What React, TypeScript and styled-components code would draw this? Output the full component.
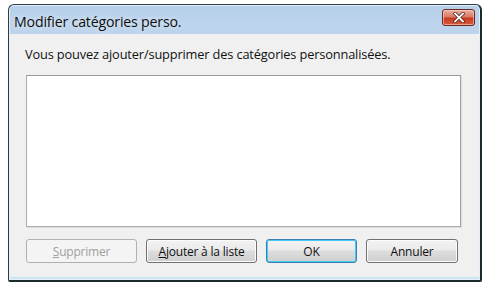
import React from "react";
import styled, { createGlobalStyle } from "styled-components";

const Global = createGlobalStyle`
  html, body { margin: 0; padding: 0; background: #ffffff; }
  body { font-family: "Open Sans", "Noto Sans", sans-serif; }
`;

const Page = styled.div`
  padding: 4px 0 0 8px;
`;

const Window = styled.div`
  width: 471px;
  border: 1px solid #2f3b44;
  border-right-width: 2px;
  border-bottom-width: 2px;
  border-right-color: #1c2a2e;
  border-bottom-color: #1c2a2e;
  border-radius: 6px 6px 2px 2px;
  background: linear-gradient(180deg, #b7d0ea 0%, #c8dcf0 30%, #d6e6f5 100%);
  display: flex;
  flex-direction: column;
  box-shadow: inset 0 0 0 1px #e3eef9;
  overflow: hidden;
`;

const TitleBar = styled.div`
  height: 29px;
  display: flex;
  align-items: flex-start;
  justify-content: space-between;
  padding: 0 5px 0 5px;
  flex: none;
`;

const Title = styled.span`
  margin-top: 8px;
  font-size: 14.2px;
  line-height: 18px;
  color: #0f0f0f;
  letter-spacing: -0.2px;
  text-shadow: 0 0 6px rgba(255, 255, 255, 0.9);
`;

const CloseBtn = styled.div`
  margin-top: 4px;
  width: 33px;
  height: 17px;
  box-sizing: border-box;
  border: 1px solid #6b2a20;
  border-radius: 3px;
  background: linear-gradient(180deg, #eab0a2 0%, #d97a66 45%, #c6391f 55%, #da5d3f 100%);
  display: flex;
  align-items: center;
  justify-content: center;
  box-shadow: inset 0 0 0 1px rgba(255, 220, 210, 0.55);
`;

const Content = styled.div`
  margin: 0 1px 2px 1px;
  background: #f0f0f0;
  border-bottom: 1px solid #bfe6ee;
  display: flex;
  flex-direction: column;
  padding: 12px 18px 14px 15px;
`;

const Label = styled.div`
  font-size: 12.8px;
  color: #111111;
  letter-spacing: -0.15px;
  height: 16px;
  line-height: 16px;
`;

const ListBox = styled.div`
  margin-top: 13px;
  margin-left: 1px;
  height: 150px;
  background: #ffffff;
  border: 1px solid #abadb3;
  border-top-color: #9a9a9a;
  border-right-color: #a0a0a0;
  box-shadow: 1px 1px 0 #dcdcdc;
`;

const ButtonRow = styled.div`
  margin-top: 12px;
  margin-left: 1px;
  display: flex;
  gap: 9px;
`;

const Button = styled.div<{ $w: number; $disabled?: boolean; $default?: boolean }>`
  width: ${(p) => p.$w}px;
  height: 24px;
  box-sizing: border-box;
  border: 1px solid ${(p) => (p.$disabled ? "#adb2b5" : p.$default ? "#3c7fb1" : "#707070")};
  border-radius: 3px;
  background: ${(p) =>
    p.$disabled
      ? "#f4f4f4"
      : "linear-gradient(180deg, #f2f2f2 0%, #ebebeb 45%, #dddddd 50%, #cfcfcf 100%)"};
  box-shadow: ${(p) =>
    p.$default ? "inset 0 0 0 1px #48c8f5" : p.$disabled ? "none" : "inset 0 0 0 1px #fcfcfc"};
  display: flex;
  align-items: center;
  justify-content: center;
  font-size: 12px;
  letter-spacing: -0.2px;
  color: ${(p) => (p.$disabled ? "#a0a0a0" : "#111111")};
`;

const U = styled.span`
  text-decoration: underline;
`;

export default function App() {
  return (
    <>
      <Global />
      <Page>
        <Window>
          <TitleBar>
            <Title>Modifier catégories perso.</Title>
            <CloseBtn>
              <svg width="12" height="11" viewBox="0 0 12 11">
                <path d="M2 1.5 L10 9.5 M10 1.5 L2 9.5" stroke="#4a1a12" strokeWidth="3.2" strokeLinecap="square" />
                <path d="M2 1.5 L10 9.5 M10 1.5 L2 9.5" stroke="#ffffff" strokeWidth="1.8" strokeLinecap="square" />
              </svg>
            </CloseBtn>
          </TitleBar>
          <Content>
            <Label>Vous pouvez ajouter/supprimer des catégories personnalisées.</Label>
            <ListBox />
            <ButtonRow>
              <Button $w={111} $disabled>
                <span>
                  <U>S</U>upprimer
                </span>
              </Button>
              <Button $w={111}>
                <span>
                  <U>A</U>jouter à la liste
                </span>
              </Button>
              <Button $w={91} $default>
                OK
              </Button>
              <Button $w={92}>Annuler</Button>
            </ButtonRow>
          </Content>
        </Window>
      </Page>
    </>
  );
}
